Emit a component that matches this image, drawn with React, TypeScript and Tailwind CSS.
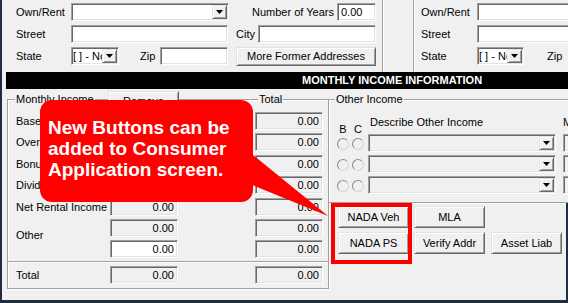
import React from "react";

const F = "font-['Liberation_Sans',Arial,sans-serif]";
const sunken =
  "border border-t-[#a0a0a0] border-l-[#a0a0a0] border-b-white border-r-white shadow-[inset_1px_1px_0_#696969,inset_-1px_-1px_0_#e3e3e3]";
const raised =
  "border border-t-[#e3e3e3] border-l-[#e3e3e3] border-b-[#696969] border-r-[#696969] shadow-[inset_1px_1px_0_#fff,inset_-1px_-1px_0_#a0a0a0]";

function Tri() {
  return (
    <svg width="7" height="4" viewBox="0 0 7 4">
      <polygon points="0,0 7,0 3.5,4" fill="#000" />
    </svg>
  );
}

function Select({ cls, text = "", bg = "bg-white" }: { cls: string; text?: string; bg?: string }) {
  return (
    <div className={`flex h-[18px] shrink-0 p-[1px] ${sunken} ${bg} ${cls}`}>
      <div className="flex-1 overflow-hidden whitespace-nowrap leading-[14px]">{text}</div>
      <div className={`w-[15px] h-[14px] shrink-0 flex items-center justify-center bg-[#f0f0f0] ${raised}`}>
        <Tri />
      </div>
    </div>
  );
}

function Input({
  cls,
  text = "",
  bg = "bg-white",
  right = false,
}: {
  cls: string;
  text?: string;
  bg?: string;
  right?: boolean;
}) {
  return (
    <div
      className={`h-[18px] shrink-0 flex items-center px-[3px] leading-[14px] whitespace-nowrap overflow-hidden ${sunken} ${bg} ${
        right ? "justify-end" : ""
      } ${cls}`}
    >
      {text}
    </div>
  );
}

function Btn({ cls, children }: { cls: string; children: React.ReactNode }) {
  return (
    <div className={`shrink-0 flex items-center justify-center whitespace-nowrap bg-[#f0f0f0] ${raised} ${cls}`}>
      {children}
    </div>
  );
}

function MRow({
  label,
  mt,
  leftBg = "bg-[#f0f0f0]",
}: {
  label: string;
  mt: string;
  leftBg?: string;
}) {
  return (
    <div className={`flex items-center h-[18px] pl-[8px] ${mt}`}>
      <span className="w-[94px] shrink-0 whitespace-nowrap">{label}</span>
      <Input cls="w-[68px]" bg={leftBg} text="0.00" right />
      <div className="w-[77px] shrink-0" />
      <Input cls="w-[68px]" bg="bg-[#f0f0f0]" text="0.00" right />
    </div>
  );
}

function Radio() {
  return (
    <div className="w-[12px] h-[12px] shrink-0 rounded-full border border-t-[#8a8a8a] border-l-[#8a8a8a] border-b-[#d4d4d4] border-r-[#d4d4d4] bg-[#f0f0f0]" />
  );
}

export default function App() {
  return (
    <div
      className={`relative w-[568px] h-[303px] overflow-hidden flex flex-col bg-[#f0f0f0] border-l-2 border-b-[3px] border-[#1f2d3d] text-[11px] text-black ${F}`}
    >
      {/* top address section */}
      <div className="flex h-[72px] shrink-0">
        <div className="w-[381px] shrink-0 border-r border-[#a0a0a0] shadow-[1px_0_0_#fff] pl-[14px] pt-[3px]">
          <div className="flex items-center h-[18px]">
            <span className="w-[55px] shrink-0">Own/Rent</span>
            <Select cls="w-[158px]" />
            <span className="ml-[23px] w-[85px] shrink-0 whitespace-nowrap">Number of Years</span>
            <Input cls="w-[39px]" text="0.00" />
          </div>
          <div className="flex items-center h-[18px] mt-[4px]">
            <span className="w-[55px] shrink-0">Street</span>
            <Input cls="w-[157px]" />
            <span className="ml-[8px] w-[22px] shrink-0">City</span>
            <Input cls="w-[118px]" />
          </div>
          <div className="flex items-start h-[19px] mt-[4px]">
            <span className="w-[55px] shrink-0 leading-[18px]">State</span>
            <Select cls="w-[48px]" text="[ ] - None" />
            <span className="ml-[21px] w-[20px] shrink-0 leading-[18px]">Zip</span>
            <Input cls="w-[68px]" />
            <Btn cls="ml-[8px] w-[140px] h-[19px]">More Former Addresses</Btn>
          </div>
        </div>
        <div className="w-[30px] shrink-0" />
        <div className="flex-1 border-l border-[#a0a0a0] shadow-[inset_1px_0_0_#fff] pl-[7px] pt-[3px]">
          <div className="flex items-center h-[18px]">
            <span className="w-[56px] shrink-0">Own/Rent</span>
            <Select cls="w-[200px]" />
          </div>
          <div className="flex items-center h-[18px] mt-[4px]">
            <span className="w-[56px] shrink-0">Street</span>
            <Input cls="w-[200px]" />
          </div>
          <div className="flex items-start h-[19px] mt-[4px]">
            <span className="w-[56px] shrink-0 leading-[18px]">State</span>
            <Select cls="w-[47px]" text="[ ] - None" />
            <span className="ml-[23px] w-[22px] shrink-0 leading-[18px]">Zip</span>
            <Input cls="w-[60px]" />
          </div>
        </div>
      </div>

      {/* section band */}
      <div className="ml-[4px] h-[17px] shrink-0 bg-black text-white font-bold leading-[17px] pl-[296px] whitespace-nowrap">
        MONTHLY INCOME INFORMATION
      </div>

      {/* middle */}
      <div className="flex flex-1 mt-[10px]">
        {/* Monthly Income group */}
        <div className="self-start ml-[5px] w-[322px] h-[190px] shrink-0 flex flex-col border border-[#a0a0a0] shadow-[inset_1px_1px_0_#fff,1px_1px_0_#fff]">
          <div className="flex items-center h-[16px] -mt-[9px]">
            <div className="w-[100px] shrink-0 pl-[7px]">
              <span className="bg-[#f0f0f0] px-[1px] leading-[13px] whitespace-nowrap">Monthly Income</span>
            </div>
            <Btn cls="self-start w-[71px] h-[21px]">Remove</Btn>
            <div className="w-[79px] shrink-0" />
            <span className="bg-[#f0f0f0] px-[1px] leading-[13px]">Total</span>
          </div>
          <MRow label="Base Salary" mt="mt-[5px]" />
          <MRow label="Overtime" mt="mt-[3px]" />
          <MRow label="Bonus" mt="mt-[4px]" />
          <MRow label="Dividends" mt="mt-[3px]" />
          <MRow label="Net Rental Income" mt="mt-[4px]" />
          <div className="flex pl-[8px] mt-[3px]">
            <div className="w-[94px] shrink-0 flex items-center pb-[6px]">Other</div>
            <div className="flex flex-col">
              <div className="flex">
                <Input cls="w-[68px]" bg="bg-[#f0f0f0]" text="0.00" right />
                <div className="w-[77px] shrink-0" />
                <Input cls="w-[68px]" bg="bg-[#f0f0f0]" text="0.00" right />
              </div>
              <div className="flex mt-[3px]">
                <Input cls="w-[68px]" bg="bg-white" text="0.00" right />
                <div className="w-[77px] shrink-0" />
                <Input cls="w-[68px]" bg="bg-[#f0f0f0]" text="0.00" right />
              </div>
            </div>
          </div>
          <div className="mt-[3px] h-[2px] shrink-0 border-t border-t-[#a0a0a0] border-b border-b-white" />
          <MRow label="Total" mt="mt-[3px]" />
        </div>

        {/* right column */}
        <div className="w-[239px] shrink-0 flex flex-col">
          <div className="w-[270px] h-[104px] shrink-0 flex flex-col border-t border-b border-[#a0a0a0] shadow-[inset_0_1px_0_#fff,0_1px_0_#fff]">
            <div className="flex items-center h-[16px] -mt-[9px]">
              <span className="ml-[6px] bg-[#f0f0f0] px-[1px] leading-[13px] whitespace-nowrap">Other Income</span>
            </div>
            <div className="flex mt-[7px]">
              <div className="ml-[8px] w-[27px] shrink-0 flex flex-col">
                <div className="flex gap-[3px] mt-[9px] h-[13px] leading-[13px]">
                  <span className="w-[12px] text-center">B</span>
                  <span className="w-[12px] text-center">C</span>
                </div>
                <div className="flex gap-[3px] mt-[2px]">
                  <Radio />
                  <Radio />
                </div>
                <div className="flex gap-[3px] mt-[9px]">
                  <Radio />
                  <Radio />
                </div>
                <div className="flex gap-[3px] mt-[9px]">
                  <Radio />
                  <Radio />
                </div>
              </div>
              <div className="ml-[4px] w-[188px] shrink-0 flex flex-col">
                <div className="h-[16px] leading-[16px] pl-[2px] whitespace-nowrap">Describe Other Income</div>
                <Select cls="w-[188px] mt-[4px]" bg="bg-[#f0f0f0]" />
                <Select cls="w-[188px] mt-[3px]" bg="bg-[#f0f0f0]" />
                <Select cls="w-[188px] mt-[3px]" bg="bg-[#f0f0f0]" />
              </div>
              <div className="ml-[7px] w-[40px] shrink-0 flex flex-col">
                <div className="h-[16px] leading-[16px] whitespace-nowrap">Monthly</div>
                <Input cls="w-[40px] mt-[4px]" bg="bg-[#f0f0f0]" />
                <Input cls="w-[40px] mt-[3px]" bg="bg-[#f0f0f0]" />
                <Input cls="w-[40px] mt-[3px]" bg="bg-[#f0f0f0]" />
              </div>
            </div>
          </div>
          <div className="flex-1 border-r-2 border-[#1f2d3d] pl-[9px] pt-[3px]">
            <div className="flex">
              <Btn cls="w-[71px] h-[22px]">NADA Veh</Btn>
              <Btn cls="ml-[5px] w-[71px] h-[22px]">MLA</Btn>
            </div>
            <div className="flex mt-[4px]">
              <Btn cls="w-[71px] h-[22px]">NADA PS</Btn>
              <Btn cls="ml-[5px] w-[71px] h-[22px]">Verify Addr</Btn>
              <Btn cls="ml-[6px] w-[71px] h-[22px]">Asset Liab</Btn>
            </div>
          </div>
        </div>
      </div>

      {/* annotation: red highlight box */}
      <div className="absolute left-[329px] top-[203px] w-[81px] h-[61px] border-[4px] border-[#ff0000]" />

      {/* annotation: callout pointer */}
      <svg className="absolute left-[238px] top-[145px]" width="92" height="75" viewBox="0 0 92 75">
        <polygon points="5,3.5 5,37 88,71" fill="#ff0000" />
      </svg>

      {/* annotation: callout body */}
      <div className="absolute left-[38px] top-[100px] w-[213px] h-[102px] rounded-[12px] bg-[#ff0000] text-white font-bold text-[19px] leading-[21px] pl-[8px] pt-[17px] whitespace-nowrap">
        New Buttons can be
        <br />
        added to Consumer
        <br />
        Application screen.
      </div>
    </div>
  );
}
